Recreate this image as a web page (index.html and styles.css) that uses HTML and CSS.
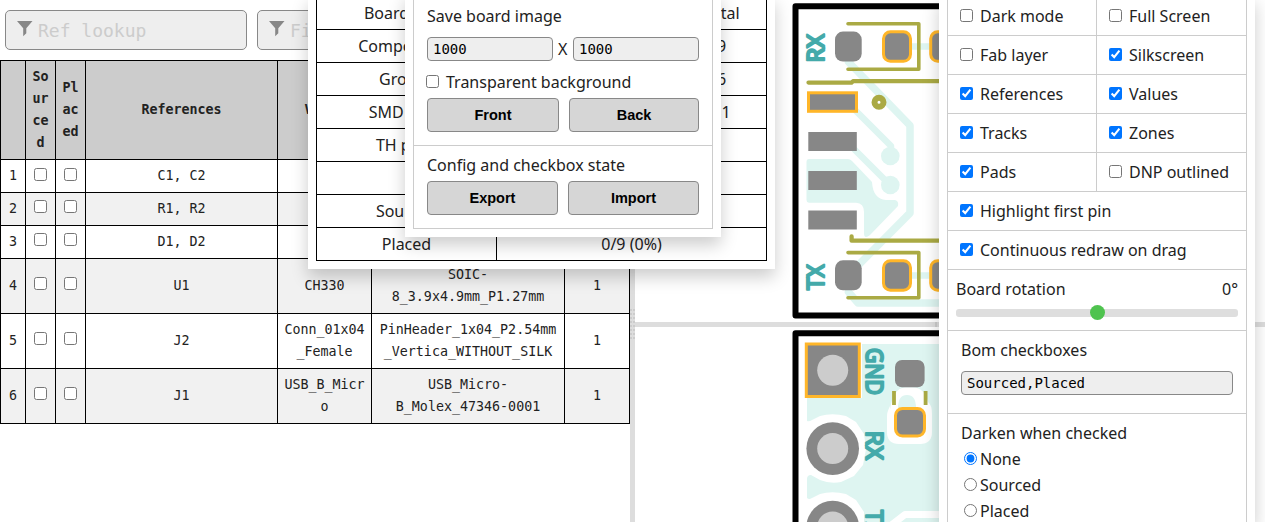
FILE: index.html
```html
<!DOCTYPE html>
<html lang="en">
<head>
<meta charset="utf-8">
<title>Interactive BOM</title>
<link rel="stylesheet" href="styles.css">
</head>
<body>
<div class="app">
  <section class="bom">
    <div class="filters">
      <label class="filter">
        <svg class="funnel" width="16" height="16" viewBox="0 0 16 16"><path d="M0 0H15.5L9.3 7.2V12.2L6.2 15.2V7.2Z"/></svg>
        <input type="text" placeholder="Ref lookup">
      </label>
      <label class="filter">
        <svg class="funnel" width="16" height="16" viewBox="0 0 16 16"><path d="M0 0H15.5L9.3 7.2V12.2L6.2 15.2V7.2Z"/></svg>
        <input type="text" placeholder="Filter">
      </label>
    </div>
    <table class="bom-table">
      <colgroup><col class="c-num"><col class="c-check"><col class="c-check"><col class="c-refs"><col class="c-value"><col class="c-foot"><col class="c-qty"></colgroup>
      <thead>
        <tr><th></th><th>Sourced</th><th>Placed</th><th>References</th><th>Value</th><th></th><th></th></tr>
      </thead>
      <tbody>
        <tr><td>1</td><td><input type="checkbox"></td><td><input type="checkbox"></td><td>C1, C2</td><td></td><td></td><td></td></tr>
        <tr><td>2</td><td><input type="checkbox"></td><td><input type="checkbox"></td><td>R1, R2</td><td></td><td></td><td></td></tr>
        <tr><td>3</td><td><input type="checkbox"></td><td><input type="checkbox"></td><td>D1, D2</td><td></td><td></td><td></td></tr>
        <tr><td>4</td><td><input type="checkbox"></td><td><input type="checkbox"></td><td>U1</td><td>CH330</td><td>SOIC-8_3.9x4.9mm_P1.27mm</td><td>1</td></tr>
        <tr><td>5</td><td><input type="checkbox"></td><td><input type="checkbox"></td><td>J2</td><td>Conn_01x04_Female</td><td>PinHeader_1x04_P2.54mm_Vertica_WITHOUT_SILK</td><td>1</td></tr>
        <tr><td>6</td><td><input type="checkbox"></td><td><input type="checkbox"></td><td>J1</td><td>USB_B_Micro</td><td>USB_Micro-B_Molex_47346-0001</td><td>1</td></tr>
      </tbody>
    </table>
  </section>

  <div class="gutter gutter-v"><span class="grip"></span></div>

  <section class="boards">
    <svg class="board board-front" viewBox="635 0 630 322">
      <g class="zone-line">
        <path stroke-width="7.5" d="M848.5 62L910 125.500V213L848.500 275"/>
        <path stroke-width="6.500" d="M853 108L891 146V155M855 150L890 185M905 46.600H935M905 275.500H935"/>
        <path stroke-width="7.500" d="M848.500 292L858 303H1100"/>
      </g>
      <path class="zone" d="M809 159H848Q850 159 852 161L872 182Q873 199 886 200H895Q899 201 898 206L870 235Q864 240 864 233V212Q864 203 856 202.700H809Q806.500 202.500 806.500 200V162Q806.500 159 809 159Z"/>
      <circle class="zone" cx="890.300" cy="156" r="9.300"/>
      <circle class="zone" cx="890.300" cy="185" r="9.300"/>
      <path class="edge" d="M1100 6.300H795.500V315.600H1100"/>
      <g class="pad">
        <rect x="835" y="31.600" width="26.700" height="30" rx="8"/>
        <rect x="835" y="260.300" width="26.700" height="30" rx="8"/>
        <rect x="808.300" y="132" width="48.500" height="19"/>
        <rect x="808.300" y="171" width="48.500" height="19"/>
        <rect x="808.300" y="210.500" width="48.500" height="19"/>
      </g>
      <g class="pad pin1">
        <rect x="808.500" y="92.800" width="48" height="18.500"/>
        <rect x="883.500" y="31.800" width="27" height="29.500" rx="7"/>
        <rect x="930.700" y="31.800" width="27" height="29.500" rx="7"/>
        <rect x="883.500" y="260.700" width="27" height="29.500" rx="7"/>
        <rect x="930.700" y="260.700" width="27" height="29.500" rx="7"/>
      </g>
      <g class="silk">
        <path stroke-width="3.600" d="M848 23.800H918.800V69.300H848M848 252.600H918.800V297.800H848"/>
        <path stroke-width="4.300" d="M808.500 82.600H851.500L853 81.200H1100M851.600 236.500V240.700H1100"/>
      </g>
      <circle class="ring" cx="879" cy="102.200" r="4.500"/>
      <g class="legend">
        <text transform="translate(823.700 62.600) rotate(-90)" textLength="28.600" lengthAdjust="spacingAndGlyphs">RX</text>
        <text transform="translate(823.700 290) rotate(-90)" textLength="25.500" lengthAdjust="spacingAndGlyphs">TX</text>
      </g>
    </svg>

    <div class="gutter gutter-h"><span class="grip"></span></div>

    <svg class="board board-back" viewBox="635 327 630 195">
      <path class="zone" d="M807 344H1100V522H807Z"/>
      <path class="clear" d="M804 341H862V398H811Q807 398 807 402H804Z"/>
      <path class="zone" d="M807 398H862V425H811Q807 425 807 421Z"/>
      <g class="clear">
        <path d="M800 421H807Q809 422 812 420L820 416Q832 412.500 846 416L856 422L864 434L866 449L863 465L854 476L841 482Q830 484 820 480L811 475Q807 475 807 479H800Z"/>
        <path d="M800 498H807Q809 500 812 498L820 494Q832 490.500 846 494L856 500L864 512V522H800Z"/>
        <path d="M890 410Q893 388 905 387.500H913Q925 388 928 402Q932 405 932 414V432Q932 444 920 444H899Q887 444 887 432V416Q887 412 890 406Z"/>
      </g>
      <path class="zone" d="M898 408Q898 395 907 395Q916 395 916 408Z"/>
      <path class="clear-line" d="M885 530L905 514.500H1100"/>
      <path class="edge" d="M1100 333.300H795.500V530"/>
      <g class="pad pin1">
        <rect x="806.300" y="344" width="53" height="52.500"/>
        <rect x="895.500" y="408.500" width="29" height="27.500" rx="7"/>
      </g>
      <g class="pad">
        <rect x="895" y="360" width="29.600" height="27.300" rx="7"/>
        <circle cx="832.700" cy="448.600" r="26.300"/>
        <circle cx="832.700" cy="527" r="26.300"/>
      </g>
      <g class="hole">
        <circle cx="832.700" cy="370.300" r="15.500"/>
        <circle cx="832.700" cy="448.600" r="15.500"/>
        <circle cx="832.700" cy="527" r="15.500"/>
      </g>
      <path class="silk square" stroke-width="3.800" d="M894 391V405M925.600 391V405"/>
      <g class="legend">
        <text transform="translate(866.300 348) rotate(90)" textLength="47" lengthAdjust="spacingAndGlyphs">GND</text>
        <text transform="translate(866.300 430.800) rotate(90)" textLength="29" lengthAdjust="spacingAndGlyphs">RX</text>
        <text transform="translate(866.300 510) rotate(90)" textLength="25.500" lengthAdjust="spacingAndGlyphs">TX</text>
      </g>
    </svg>
  </section>
</div>

<div class="menu stats">
  <table class="stats-table">
    <tr><td class="name">Board stats</td><td></td><td></td><td>Total</td></tr>
    <tr><td>Components</td><td></td><td></td><td>9</td></tr>
    <tr><td>Groups</td><td></td><td></td><td>6</td></tr>
    <tr><td>SMD pads</td><td></td><td></td><td>31</td></tr>
    <tr><td>TH pads</td><td></td><td></td><td></td></tr>
    <tr><td colspan="4"></td></tr>
    <tr><td>Sourced</td><td colspan="3"></td></tr>
    <tr><td>Placed</td><td colspan="3">0/9 (0%)</td></tr>
  </table>
</div>

<div class="menu save">
  <div class="frame">
    <div class="block image-block">
      <div class="title">Save board image</div>
      <div class="size"><input class="field" type="text" value="1000"><span>X</span><input class="field" type="text" value="1000"></div>
      <label class="transparent"><input type="checkbox">Transparent background</label>
      <div class="buttons"><button class="front">Front</button><button>Back</button></div>
    </div>
    <div class="block config-block">
      <div class="title">Config and checkbox state</div>
      <div class="buttons"><button>Export</button><button>Import</button></div>
    </div>
  </div>
</div>

<div class="menu settings">
  <div class="options">
    <label class="opt"><input type="checkbox">Dark mode</label><label class="opt right"><input type="checkbox">Full Screen</label>
    <label class="opt"><input type="checkbox">Fab layer</label><label class="opt right"><input type="checkbox" checked>Silkscreen</label>
    <label class="opt"><input type="checkbox" checked>References</label><label class="opt right"><input type="checkbox" checked>Values</label>
    <label class="opt"><input type="checkbox" checked>Tracks</label><label class="opt right"><input type="checkbox" checked>Zones</label>
    <label class="opt"><input type="checkbox" checked>Pads</label><label class="opt right"><input type="checkbox">DNP outlined</label>
    <label class="opt wide"><input type="checkbox" checked>Highlight first pin</label>
    <label class="opt wide"><input type="checkbox" checked>Continuous redraw on drag</label>
    <div class="rotation wide">
      <div class="rotation-head"><span>Board rotation</span><span>0°</span></div>
      <input class="slider" type="range" min="-180" max="180" value="0">
    </div>
    <div class="checkboxes wide"><div>Bom checkboxes</div><input class="field" type="text" value="Sourced,Placed"></div>
    <div class="darken wide">
      <div>Darken when checked</div>
      <label><input type="radio" name="darken" checked>None</label>
      <label><input type="radio" name="darken">Sourced</label>
      <label><input type="radio" name="darken">Placed</label>
    </div>
  </div>
</div>
</body>
</html>
```
FILE: styles.css
```css
* { box-sizing: border-box; }
body {
  margin: 0;
  height: 522px;
  position: relative;
  overflow: hidden;
  background: #fff;
  color: #222;
  font: 16px/22px "Noto Sans", sans-serif;
}
input[type="checkbox"] { width: 13px; height: 13px; margin: 0; flex: none; }

.app { display: flex; height: 522px; }
.bom { width: 630px; flex: none; }
.filters { display: flex; gap: 10px; padding: 10px 5px; }
.filter {
  display: flex;
  width: 242px;
  height: 40px;
  padding: 0 11px 0 10.5px;
  gap: 5.5px;
  align-items: center;
  border: 1px solid #888;
  border-radius: 5px;
  background: #eee;
}
.filter + .filter { width: 363px; }
.funnel { flex: none; fill: #878787; margin-top: -2px; }
.filter input {
  min-width: 0;
  flex: 1;
  padding: 0;
  border: 0;
  background: none;
  font: 18px "DejaVu Sans Mono", monospace;
}
.filter input::placeholder { color: #ccc; }

.bom-table {
  width: 630px;
  table-layout: fixed;
  border-collapse: collapse;
  font: 13.333px/22px "DejaVu Sans Mono", monospace;
  text-align: center;
}
.c-num { width: 25px; }
.c-check { width: 30px; }
.c-refs { width: 192px; }
.c-value { width: 94px; }
.c-foot { width: 193px; }
.bom-table th, .bom-table td {
  height: 33px;
  padding: 5px;
  border: 1px solid #000;
  overflow-wrap: anywhere;
}
.bom-table th { background: #ccc; }
.bom-table tbody tr:nth-child(even) { background: #f1f1f1; }
.bom-table input { display: block; margin: -5px auto 0; }
.bom-table tr:first-child input { margin-top: -4px; }

.gutter { display: flex; flex: none; align-items: center; justify-content: center; background: #ddd; }
.gutter-v { width: 5px; }
.gutter-h { height: 5px; }
.gutter-v .grip {
  width: 5px;
  height: 30px;
  margin-top: 126px;
  background:
    linear-gradient(90deg, transparent 2px, #ddd 2px 3px, transparent 3px),
    repeating-linear-gradient(#ccc 0 2px, #ddd 2px 4px);
}
.gutter-h .grip { width: 30px; height: 5px; background: repeating-linear-gradient(90deg, #ccc 0 2px, #ddd 2px 4px); }

.boards { display: flex; flex: 1; flex-direction: column; }
.board { display: block; width: 630px; flex: none; }
.board-front { height: 322px; }
.board-back { height: 195px; }
.zone { fill: #def5f1; }
.zone-line { fill: none; stroke: #def5f1; stroke-linecap: round; stroke-linejoin: round; }
.clear { fill: #fff; }
.clear-line { fill: none; stroke: #fff; stroke-width: 7; stroke-linejoin: round; }
.edge { fill: none; stroke: #000; stroke-width: 6; stroke-linejoin: round; }
.pad { fill: #878787; }
.pin1 { stroke: #ffb629; stroke-width: 3; }
.hole { fill: #ccc; }
.silk { fill: none; stroke: #aa4; stroke-linecap: round; stroke-linejoin: round; }
.silk.square { stroke-linecap: butt; }
.ring { fill: #fff; stroke: #aa4; stroke-width: 6; }
.legend {
  fill: #4aa;
  stroke: #4aa;
  stroke-width: 2.2;
  stroke-linejoin: round;
  font: 400 24px "Noto Sans", sans-serif;
}

.menu { position: absolute; background: #fff; box-shadow: 0 8px 16px 0 rgba(0, 0, 0, .2); }
.stats { left: 308px; top: -4px; width: 467px; padding: 0 8px 8px; }
.stats-table { width: 451px; table-layout: fixed; border-collapse: collapse; text-align: center; }
.stats-table td { height: 33px; padding: 5px; border: 1px solid #000; }
.stats-table .name { width: 180px; }

.save { left: 405px; top: -8px; width: 316px; height: 245px; padding: 0 8px 8px; }
.frame { height: 237px; border: 1px solid #ccc; border-top: 0; }
.block { padding: 0 13px; }
.image-block { height: 154px; padding-top: 13px; border-bottom: 1px solid #ccc; }
.field {
  height: 24px;
  padding: 0 5px;
  border: 1px solid #888;
  border-radius: 4px;
  background: #eee;
  color: #000;
  font: 14px "DejaVu Sans Mono", monospace;
}
.size { display: flex; gap: 5px; padding-top: 10px; line-height: 24px; }
.size .field { width: 126px; flex: none; }
.size .field:last-child { margin-left: auto; }
.transparent { display: flex; gap: 7px; padding-top: 10px; }
.transparent input { margin: 4px 0 0 -1px; }
.buttons { display: flex; gap: 10px; padding-top: 5px; }
.buttons button {
  flex: 1;
  height: 34px;
  padding: 0;
  border: 1px solid #888;
  border-radius: 4px;
  background: #d6d6d6;
  color: #000;
  font: 700 14.5px "Liberation Sans", sans-serif;
}
.buttons .front { flex: 0 0 132px; }
.config-block { padding-top: 8px; }

.settings { left: 939px; top: -4px; width: 316px; height: 526px; padding: 0 8px; }
.options { display: grid; grid-template-columns: 148px 1fr; height: 526px; align-content: start; border: solid #ccc; border-width: 0 1px; }
.opt { display: flex; gap: 7px; height: 39px; padding: 8px 0 0 12px; border-bottom: 1px solid #ccc; }
.opt:first-child, .opt:nth-child(2) { height: 40px; padding-top: 9px; }
.opt input { margin-top: 4px; }
.right { border-left: 1px solid #ccc; }
.wide { grid-column: 1 / -1; }
.rotation { height: 61px; padding: 8px 8px 0; border-bottom: 1px solid #ccc; }
.rotation-head { display: flex; justify-content: space-between; }
.slider { display: block; appearance: none; width: 100%; height: 8px; margin: 9px 0 0; border-radius: 3px; background: #dedede; }
.slider::-webkit-slider-thumb { appearance: none; width: 15px; height: 15px; margin-top: -1px; border-radius: 50%; background: #4fc34f; }
.checkboxes { height: 83px; padding: 8px 13px 0; border-bottom: 1px solid #ccc; }
.checkboxes .field { display: block; width: 100%; margin-top: 10px; }
.darken { padding: 8px 13px 0; }
.darken label { display: flex; height: 26px; padding: 4px 0 0 3px; gap: 3px; }
.darken input { width: 13px; height: 13px; margin: 4px 0 0; }
```
